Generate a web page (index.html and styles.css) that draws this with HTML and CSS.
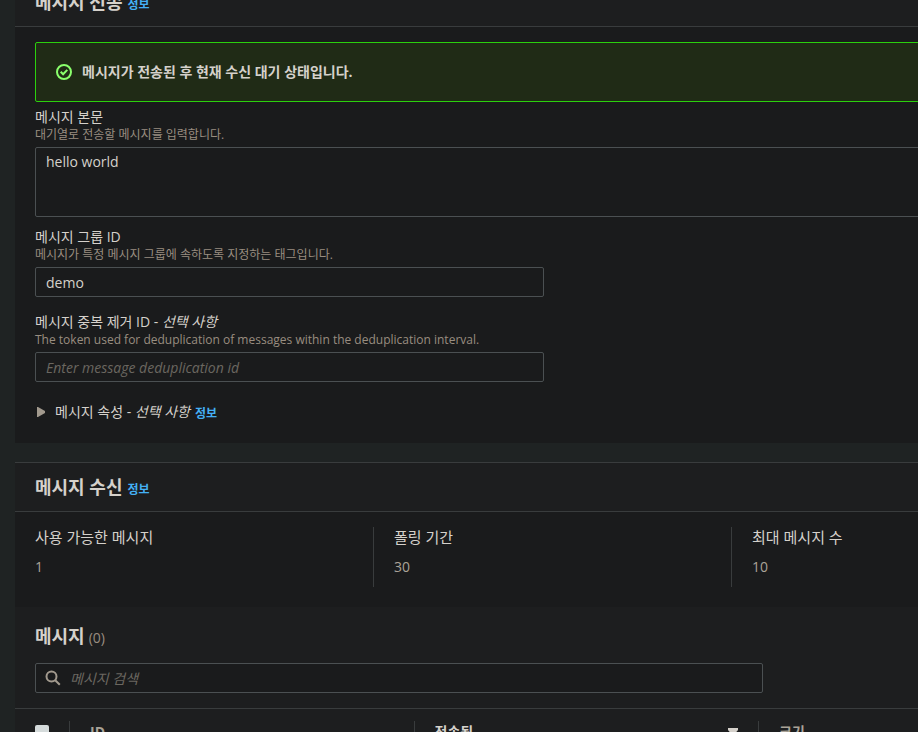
FILE: index.html
```
<!DOCTYPE html>
<html lang="ko">
<head>
    <meta charset="UTF-8">
    <meta name="viewport" content="width=device-width, initial-scale=1.0">
    <title>메시지 전송 및 수신</title>
    <link rel="stylesheet" href="styles.css">
</head>
<body>
    <main class="content">
        <section class="panel">
            <header class="panel-header">
                <h2>메시지 전송</h2>
                <a class="info" href="#">정보</a>
            </header>
            <form class="panel-body">
                <div class="alert" role="status">
                    <svg class="alert-icon" viewBox="0 0 16 16" aria-hidden="true">
                        <circle cx="8" cy="8" r="7"></circle>
                        <path d="M4.7 7.8l2.4 2.5 4.2-4.4"></path>
                    </svg>
                    <span>메시지가 전송된 후 현재 수신 대기 상태입니다.</span>
                </div>
                <div class="field field-body">
                    <label for="body">메시지 본문</label>
                    <p class="hint">대기열로 전송할 메시지를 입력합니다.</p>
                    <textarea id="body">hello world</textarea>
                </div>
                <div class="field">
                    <label for="group">메시지 그룹 ID</label>
                    <p class="hint">메시지가 특정 메시지 그룹에 속하도록 지정하는 태그입니다.</p>
                    <input type="text" id="group" value="demo">
                </div>
                <div class="field">
                    <label for="dedup">메시지 중복 제거 ID - <em>선택 사항</em></label>
                    <p class="hint">The token used for deduplication of messages within the deduplication interval.</p>
                    <input type="text" id="dedup" placeholder="Enter message deduplication id">
                </div>
                <div class="attributes">
                    <button type="button" class="expand">
                        <svg class="caret" viewBox="0 0 12 12" aria-hidden="true"><path d="M2 1v10h1l7-4v-2l-7-4z"></path></svg>
                        <span>메시지 속성 - <em>선택 사항</em></span>
                    </button>
                    <a class="info" href="#">정보</a>
                </div>
            </form>
        </section>

        <section class="panel">
            <header class="panel-header">
                <h2>메시지 수신</h2>
                <a class="info" href="#">정보</a>
            </header>
            <dl class="stats">
                <div class="stat">
                    <dt>사용 가능한 메시지</dt>
                    <dd>1</dd>
                </div>
                <div class="stat">
                    <dt>폴링 기간</dt>
                    <dd>30</dd>
                </div>
                <div class="stat">
                    <dt>최대 메시지 수</dt>
                    <dd>10</dd>
                </div>
            </dl>
            <div class="messages">
                <div class="messages-title">
                    <h2>메시지</h2>
                    <span class="count">(0)</span>
                </div>
                <div class="search">
                    <svg class="search-icon" viewBox="0 0 16 16" aria-hidden="true">
                        <circle cx="6.5" cy="6.5" r="5"></circle>
                        <path d="M10.2 10.2l4.6 4.6"></path>
                    </svg>
                    <input type="search" placeholder="메시지 검색" aria-label="메시지 검색">
                </div>
            </div>
            <table class="message-table">
                <thead>
                    <tr>
                        <th class="col-check"><input type="checkbox" aria-label="모두 선택"></th>
                        <th><div class="cell">ID</div></th>
                        <th class="sorted">
                            <div class="cell">
                                전송됨
                                <svg class="sort" viewBox="0 0 10 8" aria-hidden="true"><path d="M0 0h10v2L5 8 0 2z"></path></svg>
                            </div>
                        </th>
                        <th><div class="cell">크기</div></th>
                        <th></th>
                    </tr>
                </thead>
            </table>
        </section>
    </main>
</body>
</html>
```
FILE: styles.css
```
* {
    box-sizing: border-box;
}
body {
    margin: 0;
    height: 100vh;
    overflow: hidden;
    background-color: #1f2323;
    color: #d5d1cb;
    font-family: 'Open Sans', 'Noto Sans CJK KR', sans-serif;
    font-size: 14px;
    line-height: 18px;
}
h2, p, dl, dd {
    margin: 0;
}
h2 {
    font-size: 18px;
    line-height: 24px;
}
/* wider than the window, scrolled down past the first heading */
.content {
    width: 156%;
    margin: -23px 0 0 15px;
}
.panel {
    background-color: #1a1b1c;
    border-top: 1px solid #393c3d;
    margin-bottom: 19px;
}
.panel-header {
    display: flex;
    align-items: baseline;
    gap: 5px;
    height: 49px;
    padding: 12px 20px;
    background-color: #1d1e1f;
    border-bottom: 1px solid #393c3d;
}
.info {
    color: #44b0f4;
    font-size: 12px;
    font-weight: bold;
    text-decoration: none;
}
.panel-body {
    padding: 15px 20px 22px;
}
.alert {
    display: flex;
    align-items: center;
    gap: 10px;
    padding: 20px;
    margin-bottom: 6px;
    border: 1px solid #2bd00d;
    border-radius: 2px;
    background-color: #202b16;
    font-weight: bold;
}
.alert-icon {
    width: 16px;
    height: 16px;
    fill: none;
    stroke: #8aff6c;
    stroke-width: 2;
}
.field {
    margin-bottom: 16px;
}
.field-body {
    margin-bottom: 11px;
}
.field label {
    display: block;
}
.hint {
    padding-top: 1px;
    margin-bottom: 4px;
    color: #998d80;
    font-size: 12px;
    line-height: 16px;
}
input[type="text"],
input[type="search"],
textarea {
    display: block;
    height: 30px;
    padding: 4px 10px;
    border: 1px solid #4b5052;
    border-radius: 2px;
    background-color: #1a1b1c;
    color: #d5d1cb;
    font: inherit;
}
input[type="text"] {
    width: 509px;
    max-width: 100%;
}
textarea {
    width: 100%;
    height: 70px;
    padding: 5px 10px;
    resize: none;
}
input::placeholder {
    color: #6b6760;
    font-style: italic;
    opacity: 1;
}
.attributes {
    display: flex;
    align-items: baseline;
    gap: 5px;
    height: 23px;
    padding-top: 5px;
}
.expand {
    display: flex;
    align-items: center;
    gap: 8px;
    padding: 0;
    border: 0;
    background: none;
    color: inherit;
    font: inherit;
}
.caret {
    width: 12px;
    height: 12px;
    fill: #a29a8e;
}
.stats {
    display: grid;
    grid-template-columns: repeat(4, 1fr);
    padding: 15px 0 20px;
}
.stat {
    height: 60px;
    padding: 0 20px;
}
.stat + .stat {
    border-left: 1px solid #393c3d;
}
.stat dt {
    font-size: 15px;
    line-height: 20px;
    margin-bottom: 11px;
}
.stat dd {
    color: #aaa398;
}
.messages {
    padding: 17px 20px 15px;
    background-color: #1d1e1f;
    border-bottom: 1px solid #393c3d;
}
.messages-title {
    display: flex;
    align-items: baseline;
    gap: 4px;
    height: 24px;
    margin-bottom: 15px;
}
.count {
    color: #998d80;
}
.search {
    position: relative;
    width: 728px;
    max-width: 100%;
}
.search-icon {
    position: absolute;
    top: 7px;
    left: 10px;
    width: 16px;
    height: 16px;
    fill: none;
    stroke: #a29a8e;
    stroke-width: 2;
}
input[type="search"] {
    width: 100%;
    padding-left: 34px;
}
.message-table {
    width: 100%;
    table-layout: fixed;
    border-collapse: collapse;
    background-color: #1d1e1f;
}
.message-table th {
    padding: 12px 0;
    color: #aaa398;
    text-align: left;
}
.message-table .col-check {
    width: 54px;
    padding-left: 20px;
}
.message-table .sorted {
    color: #d5d1cb;
}
.cell {
    display: flex;
    align-items: center;
    justify-content: space-between;
    padding: 2px 20px;
    border-left: 1px solid #393c3d;
}
.sort {
    width: 10px;
    height: 8px;
    fill: #d5d1cb;
}
input[type="checkbox"] {
    display: block;
    appearance: none;
    width: 14px;
    height: 14px;
    margin: 0;
    border-radius: 2px;
    background-color: #d5dbdb;
}
```
